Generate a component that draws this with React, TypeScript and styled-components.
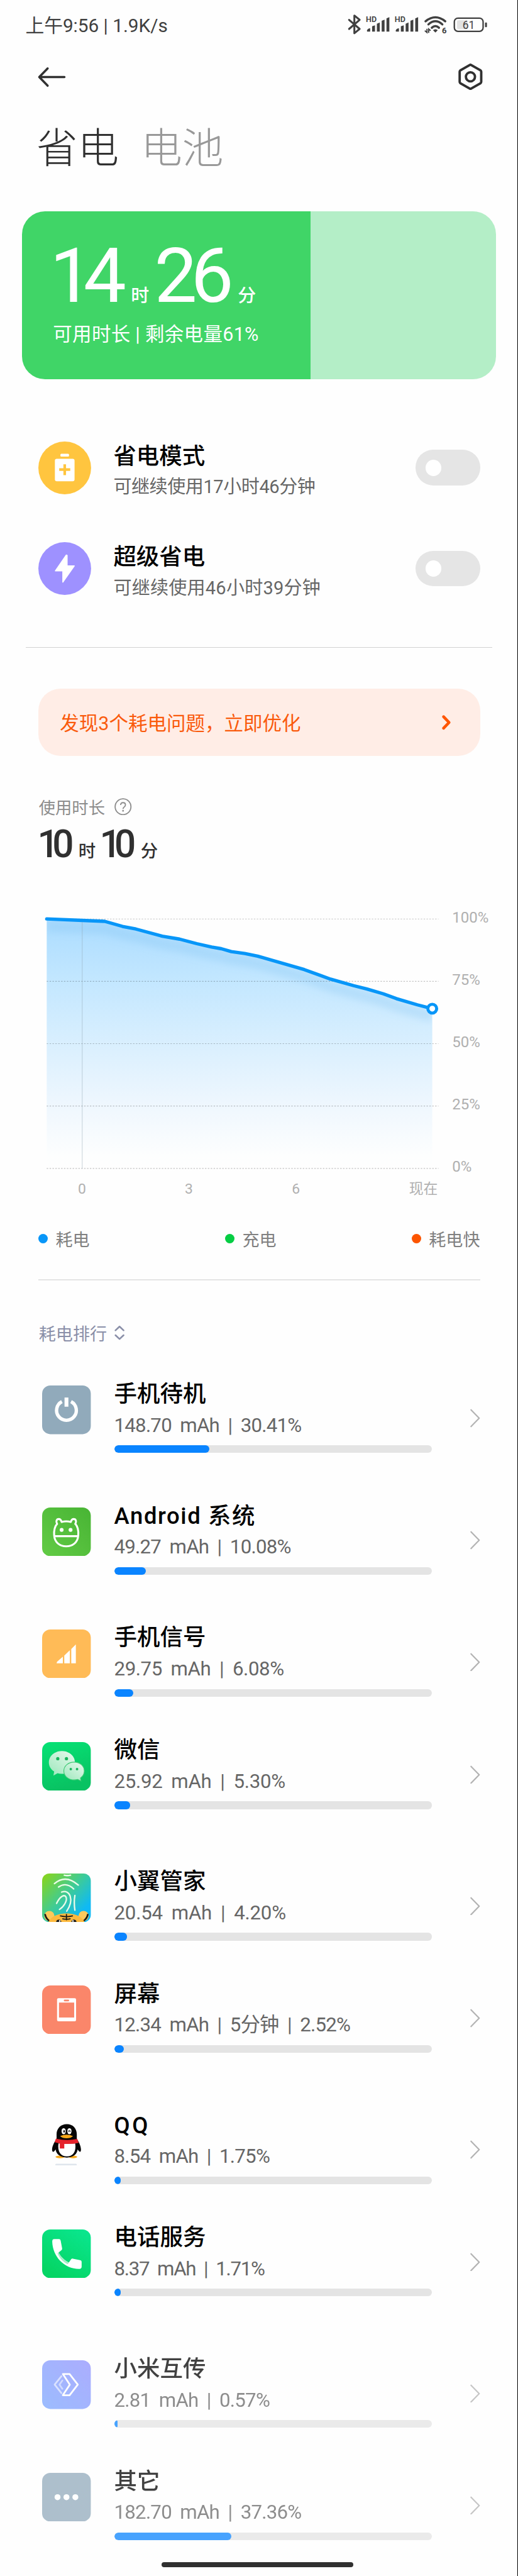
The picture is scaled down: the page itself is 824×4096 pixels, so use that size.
import type { ReactNode } from "react";
import styled, { createGlobalStyle } from "styled-components";

const GlobalStyle = createGlobalStyle`
  * {
    box-sizing: border-box;
    margin: 0;
    padding: 0;
  }
  html {
    font-size: 7.628px;
  }
  body {
    background: #fefefe;
    font-family: Roboto, "Noto Sans CJK SC", sans-serif;
    color: #000;
    overflow: hidden;
  }
  svg {
    display: block;
    flex-shrink: 0;
  }
`;

const Page = styled.div`
  display: flex;
  flex-direction: column;
  width: 100%;
  height: 100vh;
  overflow: hidden;
  white-space: nowrap;
  border-right: 0.16rem solid #000;
`;

const StatusBar = styled.div`
  display: flex;
  align-items: center;
  justify-content: space-between;
  height: 10.2rem;
  padding: 0 6.2rem 0 5.3rem;
  font-size: 3.9rem;
  color: #404040;
`;

const StatusIcons = styled.svg`
  width: 29.2rem;
  height: 4.4rem;
`;

const TopBar = styled.div`
  display: flex;
  align-items: center;
  justify-content: space-between;
  height: 11.6rem;
  padding: 0 7rem 0 7.8rem;
`;

const BackIcon = styled.svg`
  width: 6rem;
  height: 4.6rem;
`;

const SettingsIcon = styled.svg`
  width: 5.6rem;
  height: 5.8rem;
`;

const Tabs = styled.div`
  display: flex;
  align-items: center;
  gap: 4.6rem;
  height: 17.8rem;
  padding: 0.8rem 0 0 7.6rem;
`;

const Tab = styled.h1<{ $active?: boolean }>`
  font-size: 8.6rem;
  font-weight: 300;
  line-height: 10rem;
  color: ${(p) => (p.$active ? "#303030" : "#999")};
`;

const BatteryCard = styled.section`
  height: 35rem;
  margin: 4.4rem 4.4rem 0 4.6rem;
  padding: 6.9rem 0 0 5.8rem;
  border-radius: 4.8rem;
  background: linear-gradient(to right, #40d567 60.9%, #b4eec7 60.9%);
  color: #fff;
`;

const Remaining = styled.div`
  display: flex;
  align-items: baseline;
  height: 13.4rem;
`;

const RemainingValue = styled.span<{ $track: number }>`
  font-size: 15.9rem;
  line-height: 13.4rem;
  letter-spacing: ${(p) => p.$track}em;
`;

const RemainingUnit = styled.span<{ $before: number }>`
  font-size: 3.8rem;
  font-weight: 500;
  line-height: 1;
  margin: 0 1.1rem 0 ${(p) => p.$before}rem;
`;

const RemainingNote = styled.p`
  margin: 2.9rem 0 0 0.65rem;
  font-size: 4rem;
  line-height: 5rem;
  letter-spacing: 0.01em;
`;

const Modes = styled.section`
  margin-top: 8rem;
  padding: 0 7.8rem 0 8rem;
`;

const ModeRow = styled.div`
  display: flex;
  align-items: center;
  height: 21rem;
`;

const ModeIcon = styled.svg`
  width: 11rem;
  height: 11rem;
`;

const ModeText = styled.div`
  flex: 1;
  margin-left: 4.65rem;
  padding-top: 1.7rem;
`;

const Title = styled.h2<{ $track?: number }>`
  font-size: 4.78rem;
  font-weight: 500;
  line-height: 5.4rem;
  letter-spacing: ${(p) => p.$track ?? 0}em;
`;

const ModeNote = styled.p<{ $track: number }>`
  margin-top: 1.1rem;
  font-size: 3.81rem;
  line-height: 5.4rem;
  letter-spacing: ${(p) => p.$track}em;
  color: #666;
`;

const Toggle = styled.div`
  display: flex;
  align-items: center;
  width: 13.4rem;
  height: 7.4rem;
  padding-left: 2rem;
  border-radius: 3.7rem;
  background: #e5e5e5;

  &::before {
    content: "";
    width: 3.4rem;
    height: 3.4rem;
    border-radius: 50%;
    background: #fff;
  }
`;

const Divider = styled.hr<{ $inset?: boolean }>`
  flex-shrink: 0;
  border: 0;
  height: ${(p) => (p.$inset ? "0.25rem" : "0.14rem")};
  margin: ${(p) => (p.$inset ? "5.9rem 7.8rem 0 8rem" : "5.9rem 5.2rem 0 5.4rem")};
  background: ${(p) => (p.$inset ? "#e4e4e4" : "#d2d2d2")};
`;

const Alert = styled.div`
  display: flex;
  align-items: center;
  justify-content: space-between;
  flex-shrink: 0;
  height: 14rem;
  margin: 8.5rem 7.8rem 0 8rem;
  padding: 0 5.8rem 0 4.5rem;
  border-radius: 4.6rem;
  background: #ffede6;
  color: #fa5a0c;
  font-size: 4rem;
`;

const AlertArrow = styled.svg`
  width: 2.4rem;
  height: 3.6rem;
`;

const Usage = styled.section`
  padding-left: 8.1rem;
  margin-top: 8.1rem;
`;

const UsageLabel = styled.div`
  display: flex;
  align-items: center;
  gap: 2rem;
  height: 5rem;
  font-size: 3.45rem;
  color: #8c8c8c;
`;

const HelpIcon = styled.svg`
  width: 3.6rem;
  height: 3.6rem;
`;

const Duration = styled.div`
  display: flex;
  align-items: baseline;
  height: 8rem;
  margin: 1.4rem 0 0 -0.3rem;
  font-weight: 500;
  color: #303030;
`;

const DurationValue = styled.span`
  font-size: 7.9rem;
  line-height: 8rem;
  letter-spacing: -0.175em;
`;

const DurationUnit = styled.span`
  font-size: 3.6rem;
  line-height: 1;
  margin: 0 0.8rem 0 2.35rem;
`;

const Chart = styled.section`
  display: flex;
  align-items: flex-start;
  margin-top: 9.25rem;
  padding-left: 9rem;
`;

const ChartPlot = styled.svg`
  width: 83rem;
  height: 55rem;
  margin-top: 0.65rem;
`;

const PercentAxis = styled.div`
  display: flex;
  flex-direction: column;
  justify-content: space-between;
  height: 56rem;
  margin-left: 2.3rem;
  font-size: 3.15rem;
  line-height: 4rem;
  color: #b0b0b0;
`;

const HourAxis = styled.div`
  display: grid;
  grid-template-columns: repeat(3, 22.3rem) 18.45rem;
  margin-top: 0.65rem;
  padding-left: 5.95rem;
  font-size: 3rem;
  line-height: 4rem;
  text-align: center;
  color: #b0b0b0;

  span:last-child {
    text-align: right;
  }
`;

const Legend = styled.div`
  display: flex;
  justify-content: space-between;
  margin-top: 5.8rem;
  padding: 0 7.8rem 0 8rem;
`;

const LegendItem = styled.div<{ $color: string }>`
  display: flex;
  align-items: center;
  gap: 1.6rem;
  height: 5rem;
  font-size: 3.55rem;
  color: #808080;

  &::before {
    content: "";
    width: 2rem;
    height: 2rem;
    border-radius: 50%;
    background: ${(p) => p.$color};
  }
`;

const RankHeader = styled.div`
  display: flex;
  align-items: center;
  gap: 1.4rem;
  height: 5rem;
  margin-top: 8.5rem;
  padding-left: 8.1rem;
  font-size: 3.55rem;
  color: #8a8fa8;
`;

const SortIcon = styled.svg`
  width: 2.4rem;
  height: 3.2rem;
`;

const RankList = styled.ul`
  margin-top: 7.5rem;
  padding: 0 7.6rem 0 8.8rem;
  list-style: none;
`;

const RankItem = styled.li<{ $gap: number; $dim?: boolean }>`
  display: flex;
  align-items: center;
  height: 15rem;
  margin-bottom: ${(p) => p.$gap}rem;
  opacity: ${(p) => (p.$dim ? 0.74 : 1)};
`;

const AppIcon = styled.svg`
  width: 10.15rem;
  height: 10.15rem;
  margin-bottom: 2.9rem;
`;

const RankBody = styled.div`
  width: 66.2rem;
  height: 15rem;
  margin-left: 4.85rem;
`;

const RankNote = styled.p<{ $track?: number }>`
  margin-top: 1.4rem;
  font-size: 4.1rem;
  line-height: 5rem;
  letter-spacing: ${(p) => p.$track ?? -0.025}em;
  word-spacing: 0.205em;
  color: #666;
`;

const Track = styled.div`
  height: 1.6rem;
  margin-top: 1.6rem;
  border-radius: 0.8rem;
  overflow: hidden;
  background: #e4e4e4;
`;

const Fill = styled.div`
  height: 100%;
  border-radius: 0.8rem;
  background: #0a84ff;
`;

const RowArrow = styled.svg`
  width: 2.4rem;
  height: 4rem;
  margin: 0.4rem 0 0 auto;
`;

const HomeIndicator = styled.div`
  flex-shrink: 0;
  width: 40rem;
  height: 1.1rem;
  margin: 4.6rem 0 0 33.7rem;
  border-radius: 0.6rem;
  background: #303030;
`;

const SignalBars = ({ x }: { x: number }) => (
  <g transform={`translate(${x} 0)`} fill="#404040">
    <text x="-2" y="17.5" fontSize="16.5" fontWeight="600" fontFamily="Roboto">
      HD
    </text>
    <path d="M0.5 37v-2.5q1-4 6.5-4.5v7z" />
    <path d="M11 37V26l6-2v13z" />
    <path d="M21 37V20.5l6-2.5V37z" />
    <path d="M31 37V14.5l6-2.5V37z" />
    <path d="M41 37V9.5l6-2.5V37z" />
  </g>
);

const iconAndroid = (
  <>
    <rect width="101" height="101" rx="17" fill="url(#androidBg)" />
    <g fill="none" stroke="#fff" strokeWidth="4" strokeLinecap="round" strokeLinejoin="round">
      <path d="M31 34C25 41 24.500 52 25 58C26 73 37 80.500 50 80.500S74 73 75 58C75.500 52 75 41 69 34" />
      <path d="M31 34C28 29 30 24 34.500 24C38 24 39.500 26.500 40.500 30Q50 27.500 59.500 30C60.500 26.500 62 24 65.500 24C70 24 72 29 69 34" />
      <path d="M26 59.500H74" />
    </g>
    <circle cx="40.500" cy="46.500" r="4" fill="#fff" />
    <circle cx="59" cy="46.500" r="4" fill="#fff" />
  </>
);

const iconWechat = (
  <>
    <rect width="101" height="101" rx="17" fill="url(#wechatBg)" />
    <path
      d="M41 18.500C56 18.500 68 28.500 68 42S56 66 41 66Q36 66 32 64.500L23.500 69.500L25 61C18 56.500 14 50 14 42C14 28.500 26 18.500 41 18.500Z"
      fill="url(#bubble)"
    />
    <path
      d="M66.500 41.500C78.500 41.500 87.500 49.500 87.500 60C87.500 66 84.500 71 79.500 74.500L80.500 80.500L74 77.500Q70.500 78.500 66.500 78.500C54.500 78.500 45 70.500 45 60S54.500 41.500 66.500 41.500Z"
      fill="url(#bubble)"
      stroke="#3fca74"
      strokeWidth="1.5"
    />
    <g fill="#18b65c">
      <circle cx="32.500" cy="34.500" r="3.4" />
      <circle cx="50.500" cy="34.500" r="3.4" />
      <circle cx="59.500" cy="56" r="2.6" />
      <circle cx="72.500" cy="56" r="2.6" />
    </g>
  </>
);

const iconButler = (
  <>
    <rect width="101" height="101" rx="15" fill="url(#butlerBg)" />
    <g fill="none" stroke="#eafbe9" strokeWidth="3" strokeLinecap="round">
      <path d="M46 3.500Q52 5 59 3.500" />
      <path d="M25.500 21Q49 1 75 24" />
      <path d="M34 28Q50 17 65.500 32" />
      <path d="M40.500 38.500C58 32 67 55 51 78" />
      <path d="M30 62C37 47 46 43 49.500 48.500C53 56 45 69 36 74.500" />
      <path d="M68 45.500Q65.500 60 68 76" />
    </g>
    <clipPath id="butlerClip">
      <rect width="101" height="101" rx="15" />
    </clipPath>
    <g clipPath="url(#butlerClip)">
      <circle cx="15" cy="88" r="10.5" fill="#fbc95c" />
      <circle cx="86" cy="88" r="10.5" fill="#fbc95c" />
      <path d="M6 84Q8 96 20 101" fill="none" stroke="#1d1a17" strokeWidth="3.5" />
      <path d="M95 84Q93 96 81 101" fill="none" stroke="#1d1a17" strokeWidth="3.5" />
      <path d="M12 103C18 88 34 83 50.500 83S83 88 89 103Z" fill="#fdb93e" />
      <g fill="none" stroke="#1d1a17" strokeWidth="2.4" strokeLinecap="round">
        <path d="M50.500 85V96" />
        <path d="M38 88Q50.500 91 63 88" />
        <path d="M43 94Q50.500 95.500 58 94" />
      </g>
      <circle cx="34.500" cy="101" r="5.5" fill="#1d1a17" />
      <circle cx="66" cy="101" r="5.5" fill="#1d1a17" />
      <circle cx="36.500" cy="98.500" r="1.6" fill="#fff" />
      <circle cx="64" cy="98.500" r="1.6" fill="#fff" />
    </g>
  </>
);

const iconPenguin = (
  <g transform="scale(0.3333) translate(-26 -41)">
    <rect x="108" y="333" width="134" height="12" rx="6" fill="#dfe5ec" />
    <ellipse cx="138" cy="290" rx="29" ry="8" fill="#f7a81b" />
    <ellipse cx="218" cy="290" rx="27" ry="8" fill="#f7a81b" />
    <path
      d="M180 86C217 86 242 112 242 150V176C252 192 268 222 268 244C268 262 260 264 247 244C243 274 220 294 180 294S114 274 110 244C98 264 88 262 88 244C88 222 106 192 116 176V150C116 112 143 86 180 86Z"
      fill="#050505"
    />
    <path d="M128 206H232C240 256 218 287 180 287S120 256 128 206Z" fill="#fff" />
    <ellipse cx="160" cy="130" rx="13" ry="19" fill="#fff" />
    <ellipse cx="196" cy="130" rx="13" ry="19" fill="#fff" />
    <ellipse cx="163" cy="131" rx="5" ry="8" fill="#050505" />
    <path d="M189 132Q196 124 203 132" fill="none" stroke="#050505" strokeWidth="5" />
    <path d="M138 160Q178 144 218 160Q205 174 178 174T138 160Z" fill="#f7a81b" />
    <path d="M112 176Q180 192 244 178L254 202Q210 212 164 209V238H136V206Q118 204 104 199Z" fill="#e5222b" />
  </g>
);

const iconPhone = (
  <>
    <rect width="101" height="101" rx="17" fill="url(#phoneBg)" />
    <path
      d="M25 20H35Q38 20 38.500 23L41.500 39Q42 41.500 40 43L34 48C39 57 47 64.500 55.500 68.500L60 62Q61.500 60 64 60.500L78.500 63.500Q82 64 82 67V77Q82 82 77 82C45 81 22 56 21 25Q21 20 25 20Z"
      fill="#fff"
    />
    <path d="M32 49.500L34 48C39 57 47 64.500 55.500 68.500L53 72C43 67 36 59 32 49.500Z" fill="#a4efc8" />
  </>
);

type AppUsage = {
  name: string;
  note: string;
  percent: number;
  gap: number;
  icon: ReactNode;
  nameTrack?: number;
  noteTrack?: number;
  dim?: boolean;
};

const apps: AppUsage[] = [
  {
    name: "手机待机",
    note: "148.70 mAh | 30.41%",
    percent: 30,
    gap: 10.4,
    icon: (
      <>
        <rect width="101" height="101" rx="17" fill="#91aabb" />
        <path d="M41 33.500A20.500 20.500 0 1 0 60 33.500" fill="none" stroke="#fff" strokeWidth="7" />
        <rect x="46.500" y="25" width="8" height="19" fill="#fff" />
      </>
    ),
  },
  {
    name: "Android 系统",
    note: "49.27 mAh | 10.08%",
    percent: 10,
    gap: 10.4,
    nameTrack: 0.044,
    icon: iconAndroid,
  },
  {
    name: "手机信号",
    note: "29.75 mAh | 6.08%",
    percent: 6,
    gap: 8.45,
    noteTrack: -0.014,
    icon: (
      <>
        <rect width="101" height="101" rx="17" fill="#ffbb57" />
        <path d="M30 70L31 67L43 56.500V70ZM46 70V54L57.500 43V70ZM60.500 70V40.500L70 31V70Z" fill="#fff" />
      </>
    ),
  },
  { name: "微信", note: "25.92 mAh | 5.30%", percent: 5, gap: 12.4, noteTrack: -0.01, icon: iconWechat },
  { name: "小翼管家", note: "20.54 mAh | 4.20%", percent: 4, gap: 8.4, noteTrack: -0.008, icon: iconButler },
  {
    name: "屏幕",
    note: "12.34 mAh | 5分钟 | 2.52%",
    percent: 3,
    gap: 12.4,
    icon: (
      <>
        <rect width="101" height="101" rx="17" fill="#fa866a" />
        <rect x="31" y="26.500" width="39.500" height="48" rx="3" fill="#fff" />
        <rect x="35" y="35.500" width="31.500" height="31" fill="#fa866a" />
        <rect x="45" y="29.500" width="11" height="3.500" rx="1.700" fill="#fa866a" />
      </>
    ),
  },
  { name: "QQ", note: "8.54 mAh | 1.75%", percent: 2, gap: 8.4, nameTrack: 0.1, icon: iconPenguin },
  { name: "电话服务", note: "8.37 mAh | 1.71%", percent: 2, gap: 12.4, noteTrack: -0.042, icon: iconPhone },
  {
    name: "小米互传",
    note: "2.81 mAh | 0.57%",
    percent: 1,
    gap: 8.4,
    dim: true,
    icon: (
      <>
        <rect width="101" height="101" rx="17" fill="url(#shareBg)" />
        <g fill="none" stroke="#fff" strokeWidth="3.6" strokeLinejoin="round" strokeLinecap="round">
          <path d="M43 28.500H57L74 50.500L57 72.500H43L57.500 50.500Z" />
          <path d="M40 33L26 50.500L40 68" opacity="0.6" />
          <path d="M42 42L36 50.500L42 59" opacity="0.5" />
        </g>
      </>
    ),
  },
  {
    name: "其它",
    note: "182.70 mAh | 37.36%",
    percent: 37,
    gap: 0,
    dim: true,
    icon: (
      <>
        <rect width="101" height="101" rx="17" fill="#91aabb" />
        <circle cx="32" cy="50.500" r="6.2" fill="#fff" />
        <circle cx="50.500" cy="50.500" r="6.2" fill="#fff" />
        <circle cx="69" cy="50.500" r="6.2" fill="#fff" />
      </>
    ),
  },
];

const levels =
  "97,1916 171,1919 218,1921 255,1931.5 283,1937 338,1952 374,1958 410,1967.5 441,1974.5 461,1978 482,1984 510,1988 537,1993.5 634,2021.5 689,2041.5 737,2055 765,2062 799,2072 826,2082 870,2095 901,2103";

const GradientDefs = styled.svg`
  position: absolute;
  width: 0;
  height: 0;
`;

const Gradients = () => (
  <GradientDefs>
    <defs>
      <linearGradient id="androidBg" x1="1" y1="0" x2="0" y2="1">
        <stop offset="0" stopColor="#48b434" />
        <stop offset="1" stopColor="#62cb45" />
      </linearGradient>
      <linearGradient id="wechatBg" x1="0" y1="0" x2="0.3" y2="1">
        <stop offset="0" stopColor="#06e275" />
        <stop offset="1" stopColor="#09c262" />
      </linearGradient>
      <linearGradient id="bubble" x1="1" y1="0" x2="0.2" y2="1">
        <stop offset="0" stopColor="#e8f9ee" />
        <stop offset="1" stopColor="#a2e9bf" />
      </linearGradient>
      <linearGradient id="butlerBg" x1="0" y1="0" x2="1" y2="0.9">
        <stop offset="0.05" stopColor="#85d421" />
        <stop offset="0.5" stopColor="#3ccb9a" />
        <stop offset="0.85" stopColor="#0fb9f5" />
      </linearGradient>
      <linearGradient id="phoneBg" x1="1" y1="0" x2="0.4" y2="1">
        <stop offset="0" stopColor="#0ae791" />
        <stop offset="1" stopColor="#05d564" />
      </linearGradient>
      <linearGradient id="shareBg" x1="1" y1="0" x2="0" y2="1">
        <stop offset="0" stopColor="#8f91ff" />
        <stop offset="1" stopColor="#7aa6ff" />
      </linearGradient>
    </defs>
  </GradientDefs>
);

const App = () => {
  return (
    <>
      <GlobalStyle />
      <Gradients />
      <Page>
        <StatusBar>
          <span>上午9:56 | 1.9K/s</span>
          <StatusIcons viewBox="0 0 292 44">
            <path
              d="M3 12L25 31L14 40V3L25 12L3 31"
              transform="translate(0 0.5)"
              fill="none"
              stroke="#404040"
              strokeWidth="4"
              strokeLinejoin="round"
              strokeLinecap="round"
            />
            <SignalBars x={40} />
            <SignalBars x={100} />
            <g fill="none" stroke="#404040" strokeWidth="4.5" strokeLinecap="round">
              <path d="M162.500 15.500Q183 -1 203.500 15.500" />
              <path d="M168.500 22Q183 9 197.500 22" />
              <path d="M175.500 29Q183 22 190.500 29" />
            </g>
            <path d="M178 34Q183 30 188 34L183 39Z" fill="#404040" />
            <path d="M161 35L165.500 39V31M169 39.500V31.500L173 35" fill="none" stroke="#404040" strokeWidth="2.5" />
            <text x="196.500" y="40" fontSize="17" fontWeight="700" fontFamily="Roboto" fill="#404040">
              6
            </text>
            <rect x="222.500" y="9" width="60" height="27.500" rx="7.500" fill="none" stroke="#404040" strokeWidth="3" />
            <rect x="228" y="13.500" width="22" height="18.500" rx="3" fill="#e2e2e2" />
            <text x="252.500" y="31" fontSize="23" textAnchor="middle" fontFamily="Roboto" fill="#404040">
              61
            </text>
            <rect x="286.500" y="18" width="4" height="10" rx="1.5" fill="#404040" />
          </StatusIcons>
        </StatusBar>

        <TopBar>
          <BackIcon
            viewBox="0 0 60 46"
            fill="none"
            stroke="#303030"
            strokeWidth="4.6"
            strokeLinecap="round"
            strokeLinejoin="round"
          >
            <path d="M22 5L4.500 23L22 41M5 23H57" />
          </BackIcon>
          <SettingsIcon viewBox="0 0 56 58" fill="none" stroke="#303030" strokeWidth="5">
            <path d="M26.500 4.500Q28 3.500 29.500 4.500L49 15.500Q50.500 16.500 50.500 18.500V39.500Q50.500 41.500 49 42.500L29.500 53.500Q28 54.500 26.500 53.500L7 42.500Q5.500 41.500 5.500 39.500V18.500Q5.500 16.500 7 15.500Z" />
            <circle cx="28" cy="29" r="9.5" />
          </SettingsIcon>
        </TopBar>

        <Tabs>
          <Tab $active>省电</Tab>
          <Tab>电池</Tab>
        </Tabs>

        <BatteryCard>
          <Remaining>
            <RemainingValue $track={-0.122}>14</RemainingValue>
            <RemainingUnit $before={2.9}>时</RemainingUnit>
            <RemainingValue $track={-0.084}>26</RemainingValue>
            <RemainingUnit $before={2.2}>分</RemainingUnit>
          </Remaining>
          <RemainingNote>可用时长 | 剩余电量61%</RemainingNote>
        </BatteryCard>

        <Modes>
          <ModeRow>
            <ModeIcon viewBox="0 0 110 110">
              <circle cx="55" cy="55" r="55" fill="#ffc53f" />
              <rect x="46" y="25.500" width="18" height="6" rx="2" fill="#fff" />
              <rect x="34.500" y="36" width="41" height="47" rx="4" fill="#fff" />
              <path d="M55 47.500V70M43.500 58.500H66.500" stroke="#ffc53f" strokeWidth="5.5" />
            </ModeIcon>
            <ModeText>
              <Title>省电模式</Title>
              <ModeNote $track={-0.015}>可继续使用17小时46分钟</ModeNote>
            </ModeText>
            <Toggle />
          </ModeRow>
          <ModeRow>
            <ModeIcon viewBox="0 0 110 110">
              <circle cx="55" cy="55" r="55" fill="#9e91ff" />
              <path
                d="M58 27L35.500 60H51V83.500L75 49.500H60V27.500Z"
                fill="#fff"
                stroke="#fff"
                strokeWidth="2"
                strokeLinejoin="round"
              />
            </ModeIcon>
            <ModeText>
              <Title>超级省电</Title>
              <ModeNote $track={0.008}>可继续使用46小时39分钟</ModeNote>
            </ModeText>
            <Toggle />
          </ModeRow>
        </Modes>

        <Divider />

        <Alert>
          发现3个耗电问题，立即优化
          <AlertArrow
            viewBox="0 0 24 36"
            fill="none"
            stroke="#ff5500"
            strokeWidth="6"
            strokeLinecap="round"
            strokeLinejoin="round"
          >
            <path d="M6 6L17.500 18L6 30" />
          </AlertArrow>
        </Alert>

        <Usage>
          <UsageLabel>
            使用时长
            <HelpIcon viewBox="0 0 36 36" fill="none" stroke="#8c8c8c" strokeWidth="2.4">
              <circle cx="18" cy="18" r="16.5" />
              <path d="M13 14.500Q13 9.500 18 9.500T23 14Q23 16.500 20.500 18.500Q18 20.500 18 22.500" />
              <circle cx="18" cy="26.500" r="0.7" />
            </HelpIcon>
          </UsageLabel>
          <Duration>
            <DurationValue>10</DurationValue>
            <DurationUnit>时</DurationUnit>
            <DurationValue>10</DurationValue>
            <DurationUnit>分</DurationUnit>
          </Duration>
        </Usage>

        <Chart>
          <ChartPlot viewBox="90 1900 830 550">
            <defs>
              <linearGradient id="levelFill" x1="0" y1="0" x2="0" y2="1">
                <stop offset="0" stopColor="#abdcff" />
                <stop offset="0.25" stopColor="#c3e7ff" />
                <stop offset="0.5" stopColor="#d9effe" />
                <stop offset="0.75" stopColor="#eff7fe" />
                <stop offset="0.95" stopColor="#fdfefe" />
                <stop offset="1" stopColor="#fefefe" />
              </linearGradient>
              <clipPath id="levelClip">
                <polygon points={`${levels} 901,2436 97,2436`} />
              </clipPath>
              <filter id="levelBlur">
                <feGaussianBlur stdDeviation="8" />
              </filter>
            </defs>
            <polygon points={`${levels} 901,2436 97,2436`} fill="url(#levelFill)" />
            <g clipPath="url(#levelClip)">
              <polyline
                points={levels}
                transform="translate(0 16)"
                fill="none"
                stroke="#7dbdee"
                strokeOpacity="0.26"
                strokeWidth="22"
                filter="url(#levelBlur)"
              />
            </g>
            <g stroke="#000" strokeOpacity="0.24" strokeWidth="1.5" strokeDasharray="3 3">
              {[1916, 2046, 2176, 2306, 2436].map((y) => (
                <path key={y} d={`M97 ${y}H914`} />
              ))}
            </g>
            <path d="M171 1916V2436" stroke="#8fa3b0" strokeOpacity="0.45" strokeWidth="1.4" />
            <polyline
              points={levels}
              fill="none"
              stroke="#0896f8"
              strokeWidth="7"
              strokeLinejoin="round"
              strokeLinecap="round"
            />
            <circle cx="901" cy="2103" r="9.2" fill="#fff" stroke="#0896f8" strokeWidth="6.4" />
          </ChartPlot>
          <PercentAxis>
            <span>100%</span>
            <span>75%</span>
            <span>50%</span>
            <span>25%</span>
            <span>0%</span>
          </PercentAxis>
        </Chart>
        <HourAxis>
          <span>0</span>
          <span>3</span>
          <span>6</span>
          <span>现在</span>
        </HourAxis>

        <Legend>
          <LegendItem $color="#0896f8">耗电</LegendItem>
          <LegendItem $color="#05cd43">充电</LegendItem>
          <LegendItem $color="#fc5500">耗电快</LegendItem>
        </Legend>

        <Divider $inset />

        <RankHeader>
          耗电排行
          <SortIcon
            viewBox="0 0 24 32"
            fill="none"
            stroke="#8a8fa8"
            strokeWidth="3.4"
            strokeLinecap="round"
            strokeLinejoin="round"
          >
            <path d="M3.500 11L12 3L20.500 11M3.500 21L12 29L20.500 21" />
          </SortIcon>
        </RankHeader>

        <RankList>
          {apps.map((app) => (
            <RankItem key={app.name} $gap={app.gap} $dim={app.dim}>
              <AppIcon viewBox="0 0 101 101">{app.icon}</AppIcon>
              <RankBody>
                <Title $track={app.nameTrack}>{app.name}</Title>
                <RankNote $track={app.noteTrack}>{app.note}</RankNote>
                <Track>
                  <Fill style={{ width: `${app.percent}%` }} />
                </Track>
              </RankBody>
              <RowArrow
                viewBox="0 0 24 40"
                fill="none"
                stroke="#b2b2b2"
                strokeWidth="2.8"
                strokeLinecap="round"
                strokeLinejoin="round"
              >
                <path d="M3 3.500L20 21L3 38.500" />
              </RowArrow>
            </RankItem>
          ))}
        </RankList>

        <HomeIndicator />
      </Page>
    </>
  );
};

export default App;
